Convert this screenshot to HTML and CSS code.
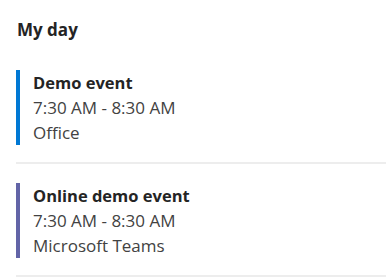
FILE: index.html
```html
<!DOCTYPE html>
<html>
<head>
<meta charset="utf-8">
<link rel="stylesheet" href="styles.css">
</head>
<body>
<div class="panel">
  <h2 class="heading">My day</h2>
  <ul class="events">
    <li class="event">
      <div class="event-body event-blue">
        <div class="event-title">Demo event</div>
        <div class="event-meta">7:30 AM - 8:30 AM</div>
        <div class="event-meta">Office</div>
      </div>
    </li>
    <li class="event">
      <div class="event-body event-purple">
        <div class="event-title">Online demo event</div>
        <div class="event-meta">7:30 AM - 8:30 AM</div>
        <div class="event-meta">Microsoft Teams</div>
      </div>
    </li>
  </ul>
</div>
</body>
</html>
```
FILE: styles.css
```css
html, body {
  margin: 0;
  padding: 0;
  background: #ffffff;
}
body {
  font-family: "Open Sans", "Noto Sans", sans-serif;
  color: #242424;
}
.panel {
  padding: 19px 0 0 16px;
}
.heading {
  margin: 0;
  font-size: 17px;
  line-height: 22px;
  font-weight: 700;
  color: #242424;
  padding-left: 1px;
}
.events {
  list-style: none;
  margin: 10px 0 0 0;
  padding: 0;
}
.event {
  padding: 19px 0 17px 0;
  border-bottom: 2px solid #ededed;
}
.event-body {
  border-left: 4px solid #0078d4;
  padding-left: 13px;
}
.event-blue { border-left-color: #0078d4; }
.event-purple { border-left-color: #6264a7; }
.event-title {
  font-size: 16.5px;
  line-height: 25px;
  font-weight: 700;
  color: #242424;
}
.event-meta {
  font-size: 17px;
  line-height: 25px;
  color: #424242;
}
```
